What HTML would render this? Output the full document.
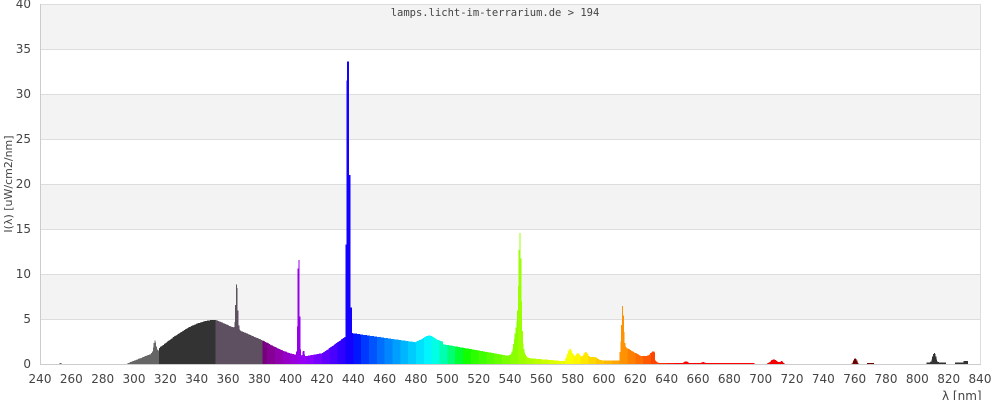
<!DOCTYPE html>
<html><head><meta charset="utf-8"><style>
html,body{margin:0;padding:0;background:#fff;width:1000px;height:400px;overflow:hidden}
svg text{font-family:"DejaVu Sans","Liberation Sans",sans-serif;fill:#444;font-size:12px}
</style></head><body>
<svg id="s" width="1000" height="400" xmlns="http://www.w3.org/2000/svg">
<g id="bg"></g>
<g id="bars" shape-rendering="crispEdges"></g>
<line x1="40.5" y1="4" x2="40.5" y2="364" stroke="#ccc"/>
<line x1="980.5" y1="4" x2="980.5" y2="364" stroke="#ddd"/>
<line x1="40" y1="364.5" x2="981" y2="364.5" stroke="#ccc"/>
<g id="lab"></g>
<text x="495" y="16" text-anchor="middle" style="font-family:'DejaVu Sans Mono','Liberation Mono',monospace;font-size:10.5px;fill:#444">lamps.licht-im-terrarium.de &gt; 194</text>
<text transform="translate(12,184) rotate(-90)" text-anchor="middle" style="font-size:11px">I(λ) [uW/cm2/nm]</text>
<text x="942" y="400" style="font-size:12px">λ [nm]</text>
</svg>
<script>
var NS="http://www.w3.org/2000/svg";
function el(p,t,a,txt){var e=document.createElementNS(NS,t);for(var k in a)e.setAttribute(k,a[k]);if(txt!=null)e.textContent=txt;p.appendChild(e);return e;}
var bg=document.getElementById('bg'),bars=document.getElementById('bars'),lab=document.getElementById('lab');
function Y(v){return 364-v*9.0;}
function X(l){return 40+(l-240)*940/600;}
for(var i=0;i<8;i++){var y0=Y((i+1)*5),y1=Y(i*5);
 el(bg,'rect',{x:40,y:y0,width:940,height:y1-y0,fill:(i%2==1)?'#f3f3f3':'#fff'});
 el(bg,'line',{x1:40,x2:980,y1:y0+0.5,y2:y0+0.5,stroke:'#ddd'});
 }
for(var v=0;v<=40;v+=5){el(lab,'text',{x:31,y:Y(v)+4,'text-anchor':'end'},String(v));}
for(var l=240;l<=840;l+=20){el(lab,'text',{x:X(l),y:383,'text-anchor':'middle'},String(l));}
function g(x,c,w,h){return h*Math.exp(-(x-c)*(x-c)/(2*w*w));}
function I(l){
 var v=0;
 if(l>=296&&l<316)v=0.1+(l-296)/20*1.4+g(l,313,0.8,1.3);
 if(l>=316&&l<352)v=1.8+3.1*Math.sin((l-316)/36*Math.PI/2);
 if(l>=352&&l<382)v=4.9-(l-352)/30*2.3;
 if(l>=382&&l<420)v=2.6-1.7*Math.sin(Math.min(1,(l-382)/28)*Math.PI/2)+(l>410?(l-410)*0.03:0);
 if(l>=420&&l<436)v=1.2+(l-420)/16*2.0;
 if(l>=436&&l<480)v=3.5-(l-436)/44*1.1;
 if(l>=480&&l<497)v=2.4+g(l,488,4,0.75);
 if(l>=497&&l<542)v=2.2-(l-497)/45*1.4;
 if(l>=542&&l<575)v=0.8-(l-542)/33*0.5;
 if(l>=575&&l<600)v=0.4+g(l,578,1.5,1.3)+g(l,583,1.5,0.8)+g(l,588,1.5,0.9)+g(l,593,2,0.4);
 if(l>=600&&l<610)v=0.4;
 if(l>=610&&l<636)v=0.9+g(l,631,1.5,0.5)-(l>632?0.8:0);
 if(l>=636&&l<696)v=0.1+g(l,652,1,0.2)+g(l,663,1,0.1);
 if(l>=702&&l<716)v=g(l,708,2,0.5)+g(l,713,1,0.3);
 if(l>=757&&l<764)v=g(l,760,1,0.6);
 if(l>=768&&l<772)v=0.1;
 if(l>=806&&l<818)v=g(l,810.5,1,1.1)+0.15;
 if(l>=824&&l<832)v=0.15+(l>829?0.2:0);
 if(l>=252.5&&l<253.5)v=0.1;
 v+=g(l,365.2,0.6,5.2);
 v+=g(l,404.8,0.5,11.5);
 v+=g(l,407.8,0.4,0.6);
 if(l>=435&&l<439){v=[31.5,33.6,21,6.3][Math.floor(l-435)];if(l<435.5)v=13.3;}
 v+=g(l,546,0.7,10)+g(l,545,2,4.3);
 if(l>=610&&l<625)v+=g(l,611.5,0.7,4.4)+Math.max(0,(1-(l-611)/12))*1.2*(l>611?1:0);
 return Math.max(0,v);
}
function wl(l){var r=0,gg=0,b=0;
 if(l<440){r=-(l-440)/60;b=1;}else if(l<490){gg=(l-440)/50;b=1;}else if(l<510){gg=1;b=-(l-510)/20;}
 else if(l<580){r=(l-510)/70;gg=1;}else if(l<645){r=1;gg=-(l-645)/65;}else{r=1;}
 var f=1;if(l<410)f=0.35+0.65*(l-380)/30;else if(l>700)f=0.4+0.6*(780-l)/80;
 function c(x){return Math.round(255*Math.pow(Math.max(0,x*f),0.8));}
 return 'rgb('+c(r)+','+c(gg)+','+c(b)+')';}
function col(l){
 if(l<316)return '#666';if(l<352)return '#333';if(l<382)return '#5e5060';
 if(l>=755&&l<775)return '#700000';
 if(l>=790)return '#333';
 return wl(Math.floor(l/5)*5+2.5);}
var step=0.5;
for(var l=250;l<835;l+=step){var v=I(l);if(v<0.05)continue;var x=X(l);
 el(bars,'rect',{x:x.toFixed(2),y:Y(v).toFixed(2),width:(step*940/600+0.3).toFixed(2),height:(v*9).toFixed(2),fill:col(l)});}
</script>
</body></html>
